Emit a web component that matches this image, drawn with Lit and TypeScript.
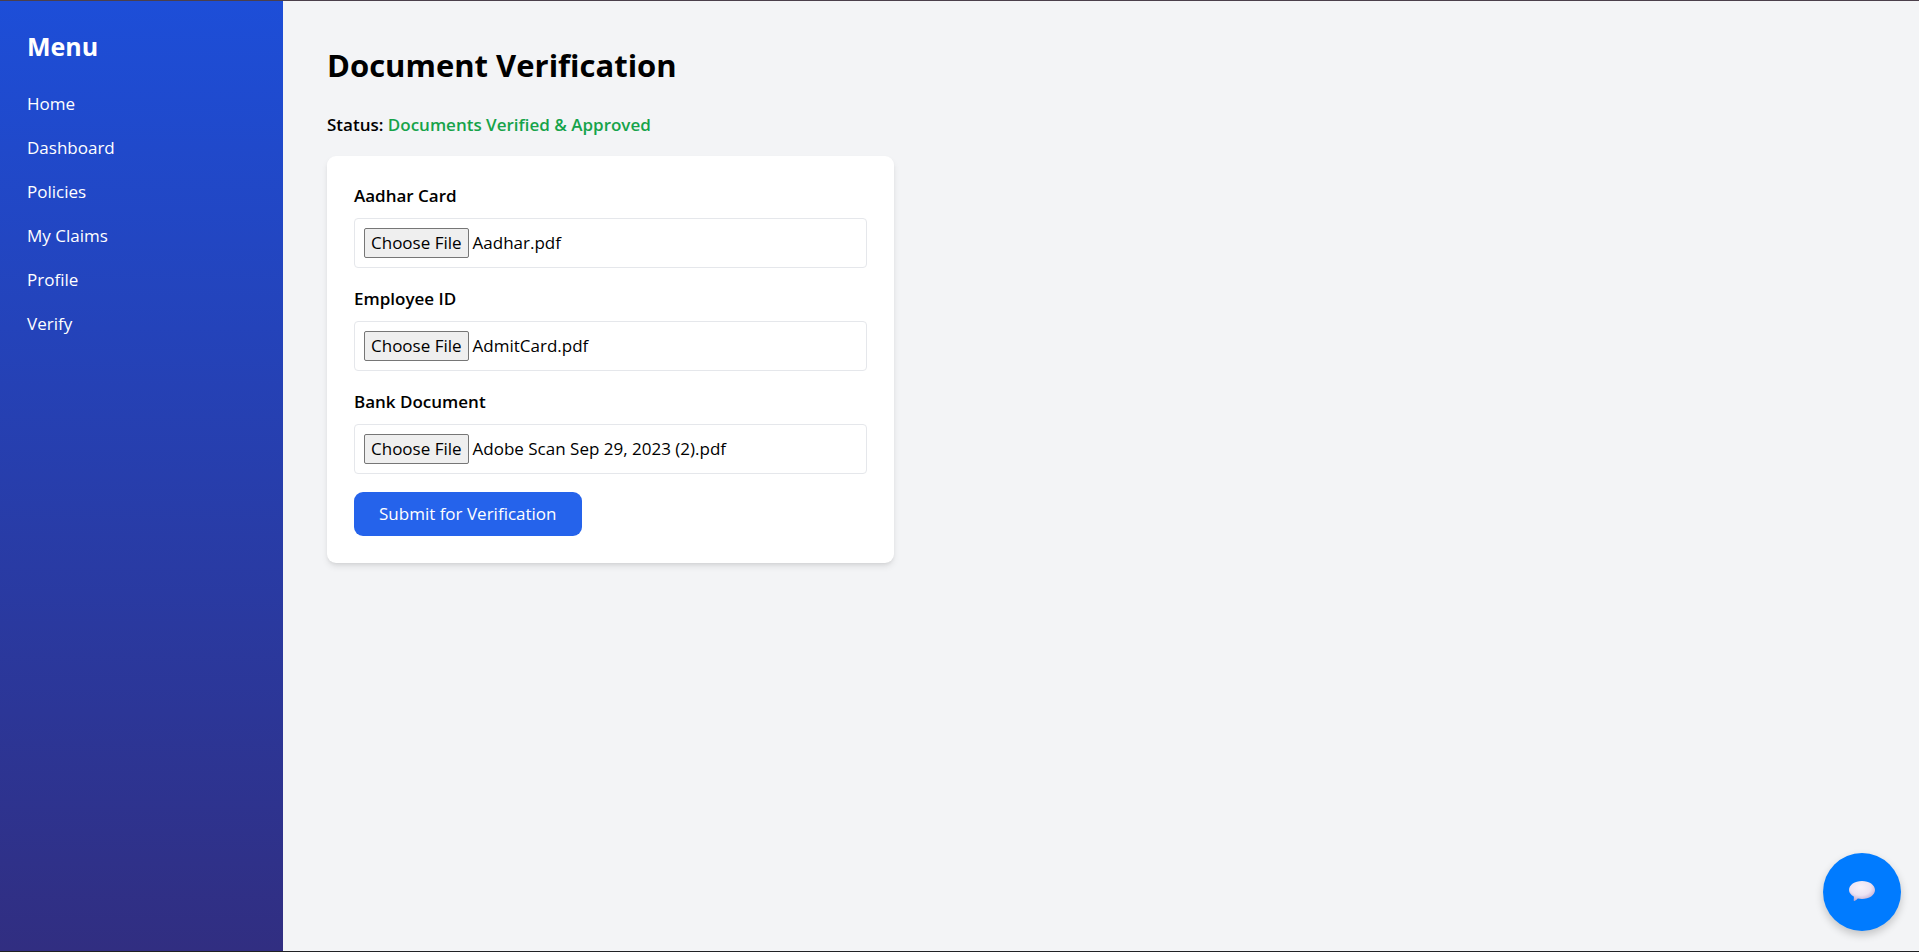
import { LitElement, html, css, svg } from "lit";
import { customElement, property } from "lit/decorators.js";

const bubble = svg`
  <defs>
    <radialGradient id="fill" cx="45%" cy="32%" r="72%">
      <stop offset="0" stop-color="#f8f2fa" />
      <stop offset="0.55" stop-color="#ece3f3" />
      <stop offset="1" stop-color="#b8a0cc" />
    </radialGradient>
  </defs>
  <path fill="url(#fill)" d="M13 0C20.2 0 26 3.900 26 9S20.200 18 13 18c-1.500 0-2.900-.1-4.200-.4-1 1.100-2.100 2.100-3.300 2.400-.6.1-.9-.2-.8-.8.1-1.300.3-2.300.1-3.800C1.800 13.900 0 11.600 0 9 0 3.900 5.800 0 13 0Z" />`;

@customElement("side-menu")
class SideMenu extends LitElement {
  static styles = css`
    :host {
      display: block;
      box-sizing: border-box;
      padding: 27px;
      color: #fff;
      background: linear-gradient(to bottom, #1d4ed8, #312e81);
    }
    .title {
      margin: 0 0 18px;
      font-size: 25px;
      line-height: 36px;
      font-weight: 700;
    }
    .list {
      margin: 0;
      padding: 0;
      list-style: none;
    }
    .link {
      display: block;
      padding: 9px 0;
      line-height: 26px;
      color: inherit;
      text-decoration: none;
    }
  `;
  private items = ["Home", "Dashboard", "Policies", "My Claims", "Profile", "Verify"];
  render() {
    return html`
      <h2 class="title">Menu</h2>
      <nav>
        <ul class="list">
          ${this.items.map((name) => html`<li><a class="link" href="#">${name}</a></li>`)}
        </ul>
      </nav>
    `;
  }
}

@customElement("file-field")
class FileField extends LitElement {
  static styles = css`
    :host {
      display: block;
    }
    .label {
      display: block;
      margin-bottom: 9px;
      line-height: 26px;
      font-weight: 600;
    }
    .input {
      display: block;
      box-sizing: border-box;
      width: 100%;
      padding: 9px;
      border: 1px solid #e5e7eb;
      border-radius: 4px;
      font: inherit;
      line-height: 26px;
      color: inherit;
    }
    .input::file-selector-button {
      box-sizing: border-box;
      height: 30px;
      margin: 0 4px 0 0;
      padding: 1px 6px;
      border: 1px solid #767676;
      border-radius: 2px;
      background: #efefef;
      font: inherit;
      color: #000;
    }
  `;
  @property() label = "";
  @property() filename = "";
  firstUpdated() {
    const input = this.renderRoot.querySelector("input")!;
    const transfer = new DataTransfer();
    transfer.items.add(new File([""], this.filename, { type: "application/pdf" }));
    input.files = transfer.files;
  }
  render() {
    return html`
      <label class="label" for="file">${this.label}</label>
      <input class="input" id="file" type="file" />
    `;
  }
}

@customElement("app-root")
class AppRoot extends LitElement {
  static styles = css`
    :host {
      display: flex;
      box-sizing: border-box;
      min-height: 100vh;
      border-top: 1px solid #4b3f4b;
      border-bottom: 1px solid #202124;
      background: #f3f4f6;
      color: #000;
      font-family: "Segoe UI", "Open Sans", "Noto Sans", sans-serif;
      font-size: 17px;
      line-height: 26px;
    }
    .menu {
      flex: 0 0 283px;
    }
    .main {
      flex: 1;
      padding: 44px;
    }
    .heading {
      margin: 0 0 27px;
      font-size: 31px;
      line-height: 40px;
      font-weight: 700;
    }
    .status {
      margin: 0 0 18px;
      font-weight: 600;
    }
    .approved {
      color: #16a34a;
    }
    .card {
      display: flex;
      flex-direction: column;
      align-items: stretch;
      gap: 18px;
      box-sizing: border-box;
      max-width: 567px;
      padding: 27px;
      border-radius: 9px;
      background: #fff;
      box-shadow: 0 4px 7px -1px rgb(0 0 0 / 0.1), 0 2px 4px -2px rgb(0 0 0 / 0.1);
    }
    .submit {
      align-self: flex-start;
      padding: 9px 25px;
      border: 0;
      border-radius: 9px;
      background: #2563eb;
      color: #fff;
      font: inherit;
    }
    .chat {
      position: fixed;
      right: 18px;
      bottom: 21px;
      display: grid;
      place-items: center;
      width: 78px;
      height: 78px;
      padding: 0;
      border: 0;
      border-radius: 50%;
      background: #007bff;
      box-shadow: 0 4px 9px rgb(0 0 0 / 0.2);
    }
  `;
  render() {
    return html`
      <side-menu class="menu"></side-menu>
      <main class="main">
        <h1 class="heading">Document Verification</h1>
        <p class="status">Status: <span class="approved">Documents Verified &amp; Approved</span></p>
        <form class="card">
          <file-field label="Aadhar Card" filename="Aadhar.pdf"></file-field>
          <file-field label="Employee ID" filename="AdmitCard.pdf"></file-field>
          <file-field label="Bank Document" filename="Adobe Scan Sep 29, 2023 (2).pdf"></file-field>
          <button class="submit" type="button">Submit for Verification</button>
        </form>
      </main>
      <button class="chat" type="button" aria-label="Open chat">
        <svg width="26" height="22" viewBox="0 0 26 22" aria-hidden="true">${bubble}</svg>
      </button>
    `;
  }
}
